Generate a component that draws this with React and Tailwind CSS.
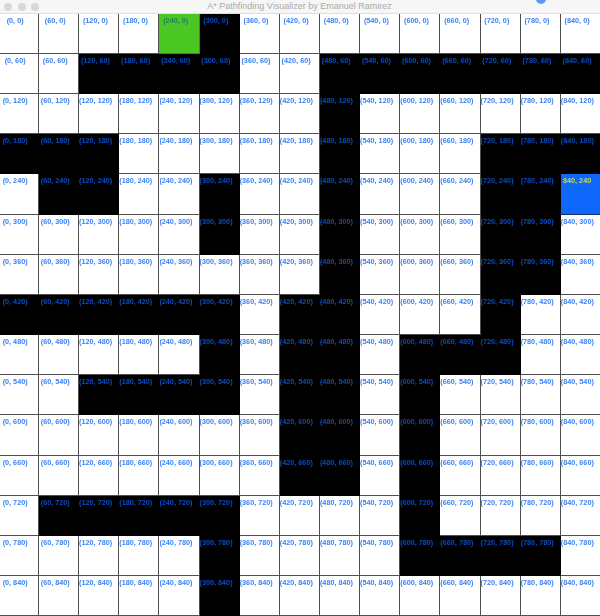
const WALLS = [
  [5],
  [2, 3, 4, 5, 8, 9, 10, 11, 12, 13, 14],
  [8],
  [0, 1, 2, 8, 12, 13, 14],
  [1, 2, 5, 8, 12, 13],
  [5, 8, 12, 13],
  [8, 12, 13],
  [0, 1, 2, 3, 4, 5, 7, 8, 12],
  [5, 7, 8, 10, 11, 12],
  [2, 3, 4, 5, 7, 8, 10],
  [7, 8, 10],
  [7, 8, 10],
  [1, 2, 3, 4, 5, 10],
  [5, 10, 11, 12, 13],
  [5],
];

const rows = Array.from({ length: 15 }, (_, r) => r);
const cols = Array.from({ length: 15 }, (_, c) => c);

function Cell({ r, c }) {
  const x = c * 60;
  const y = r * 60;
  const isStart = r === 0 && c === 4;
  const isGoal = r === 4 && c === 14;
  const isWall = WALLS[r].includes(c);

  let tone = "bg-white border-[#4f4f4f] text-[#3a82f4]";
  if (isWall) tone = "bg-black border-black text-[#0c4cc0]";
  if (isStart) tone = "bg-[#4ac722] border-[#3a8f20] text-[#1f7f5a]";
  if (isGoal) tone = "bg-[#0f68fb] border-[#12306b] text-[#c6d84a]";

  return (
    <div className={`box-border border-r border-b pr-[6.5px] pt-[2px] text-center whitespace-nowrap font-bold leading-[9px] text-[7.25px] ${tone}`}>
      {isGoal ? `${x}, ${y}` : `(${x}, ${y})`}
    </div>
  );
}

export default function App() {
  return (
    <div className="relative w-[600px] h-[616px] overflow-hidden bg-white font-['Liberation_Sans',Arial,sans-serif]">
      <div className="flex items-center h-[14px] bg-[#f6f6f6] border-b border-[#dedede] relative">
        <div className="flex items-center gap-[5.5px] pl-[4px]">
          <span className="w-[8px] h-[8px] rounded-full bg-[#d8d8d8]" />
          <span className="w-[8px] h-[8px] rounded-full bg-[#d8d8d8]" />
          <span className="w-[8px] h-[8px] rounded-full bg-[#d8d8d8]" />
        </div>
        <div className="flex-1 pr-[40px] text-center text-[9px] leading-[13px] text-[#a9a9a9] whitespace-nowrap">
          A* Pathfinding Visualizer by Emanuel Ramirez
        </div>
        <span className="absolute left-[536px] top-[-6px] w-[10px] h-[10px] rounded-full bg-[#5a9df0]" />
      </div>
      <div className="grid grid-cols-[repeat(15,40.15px)] auto-rows-[40.2px] -ml-[1.2px] -mt-[0.4px] blur-[0.35px]">
        {rows.map((r) => cols.map((c) => <Cell key={`${r}-${c}`} r={r} c={c} />))}
      </div>
    </div>
  );
}
